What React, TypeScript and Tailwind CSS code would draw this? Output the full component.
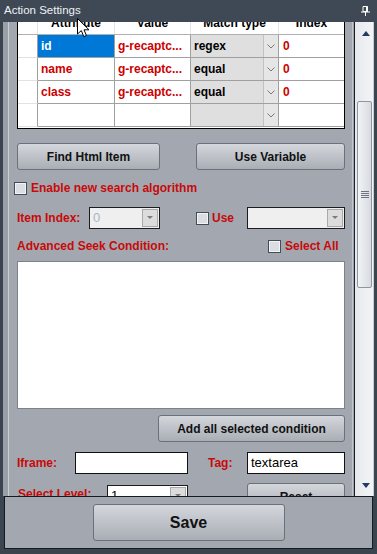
import React from "react";

type Row = { attr: string; value: string; match: string; index: string; selected?: boolean };

const rows: Row[] = [
  { attr: "id", value: "g-recaptc...", match: "regex", index: "0", selected: true },
  { attr: "name", value: "g-recaptc...", match: "equal", index: "0" },
  { attr: "class", value: "g-recaptc...", match: "equal", index: "0" },
  { attr: "", value: "", match: "", index: "" },
];

function Checkbox() {
  return (
    <span className="block w-[13px] h-[13px] shrink-0 border border-[#444c58] bg-[#dadde2] shadow-[inset_1px_1px_0_#f3f4f6,inset_-1px_-1px_0_#f3f4f6]" />
  );
}

function Btn({ label, className }: { label: string; className: string }) {
  return (
    <div
      className={`shrink-0 flex items-center justify-center rounded-[3px] border border-[#6b717a] bg-linear-to-b from-[#d4d7dc] to-[#a9aeb5] font-bold text-[#111] ${className}`}
    >
      {label}
    </div>
  );
}

function DropArrow() {
  return (
    <div className="w-[16px] h-full border border-[#a9a9a9] bg-[#dcdcdc] flex items-center justify-center">
      <svg width="6" height="4" viewBox="0 0 6 4">
        <path d="M0 0 L6 0 L3 3 Z" fill="#7b7b7b" />
      </svg>
    </div>
  );
}

function Combo({ value, className, textClass }: { value: string; className: string; textClass: string }) {
  return (
    <div className={`h-[22px] shrink-0 border border-[#1c1c1c] flex items-stretch p-[1px] ${className}`}>
      <span className={`flex-1 pl-[2px] leading-[18px] text-[13px] ${textClass}`}>{value}</span>
      <DropArrow />
    </div>
  );
}

function Field({ value, className }: { value: string; className: string }) {
  return (
    <div className={`h-[22px] shrink-0 border border-[#111] bg-white pl-[3px] leading-[20px] text-[13px] text-black ${className}`}>
      {value}
    </div>
  );
}

function Chevron() {
  return (
    <svg width="8" height="5" viewBox="0 0 8 5">
      <path d="M0.5 0.5 L4 4 L7.5 0.5" fill="none" stroke="#7a7a7a" strokeWidth="1" />
    </svg>
  );
}

function AttrTable() {
  const cols = "grid grid-cols-[20px_77px_76px_88px_65px]";
  return (
    <div className="-mt-[12px] w-[328px] shrink-0 border border-black bg-white pb-[1px]">
      <div className={`${cols} h-[24px] border-b border-[#b0b0b0] text-[12px] font-bold text-black`}>
        <div className="border-r border-[#e4e4e4]" />
        {["Attribute", "Value", "Match type", "Index"].map((h, i) => (
          <div
            key={h}
            className={`flex items-center justify-center pt-[1px] ${i < 3 ? "border-r border-[#e4e4e4]" : ""}`}
          >
            {h}
          </div>
        ))}
      </div>
      {rows.map((r, i) => (
        <div key={i} className={`${cols} h-[23px] text-[12px] font-bold text-[#cc0000]`}>
          <div className="border-r border-b border-r-[#a0a0a0] border-b-[#e2e2e2]" />
          <div className="border-r border-b border-[#a0a0a0]">
            <div
              className={`h-full pl-[3px] leading-[22px] ${r.selected ? "bg-[#0078d7] text-white" : ""}`}
            >
              {r.attr}
            </div>
          </div>
          <div className="border-r border-b border-[#a0a0a0] pl-[3px] leading-[22px]">{r.value}</div>
          <div className="border-r border-b border-[#a0a0a0] flex bg-[#dfdfdf] text-black">
            <span className="flex-1 pl-[3px] leading-[22px]">{r.match}</span>
            <span className="w-[15px] border-l border-[#c2c2c2] bg-[#e6e6e6] flex items-center justify-center">
              <Chevron />
            </span>
          </div>
          <div className="border-b border-[#a0a0a0] pl-[4px] leading-[22px]">{r.index}</div>
        </div>
      ))}
    </div>
  );
}

function Scrollbar() {
  return (
    <div className="w-[20px] h-full border-l border-[#1b1f26] flex">
      <div className="w-[18px] h-full bg-linear-to-r from-[#e6e9ed] to-[#f3f4f6] flex flex-col items-start">
        <svg className="ml-[7px] mt-[9px]" width="8" height="5" viewBox="0 0 8 5">
          <path d="M0 5 L4 0 L8 5 Z" fill="#243a63" />
        </svg>
        <div className="ml-[2px] mt-[65px] w-[15px] h-[187px] rounded-[2px] border border-[#8e96a3] bg-linear-to-r from-[#f2f3f5] to-[#d7dbe1] flex flex-col items-center justify-center gap-[1px]">
          {[0, 1, 2, 3].map((k) => (
            <span key={k} className="block w-[8px] h-[1px] bg-[#6e7581]" />
          ))}
        </div>
        <div className="flex-1" />
        <svg className="ml-[7px] mb-[8px]" width="8" height="5" viewBox="0 0 8 5">
          <path d="M0 0 L8 0 L4 5 Z" fill="#243a63" />
        </svg>
      </div>
      <div className="w-[1px] h-full bg-[#c9cdd3]" />
    </div>
  );
}

export default function App() {
  const red = "text-[#c80a0a]";
  return (
    <div
      className="relative w-[377px] h-[554px] bg-[#3b4550] flex flex-col overflow-hidden select-none"
      style={{ fontFamily: '"Liberation Sans", Arial, sans-serif' }}
    >
      {/* title */}
      <div className="h-[22px] shrink-0 bg-[#3e4955] flex items-center justify-between pl-[4px] pr-[7px]">
        <span className="text-[11.5px] text-[#eef1f4]">Action Settings</span>
        <svg width="9" height="10" viewBox="0 0 9 10">
          <path d="M2 0.5 H6.5 V5.5 H2 Z" fill="none" stroke="#ffffff" strokeWidth="1" />
          <rect x="5" y="0.5" width="1.5" height="5" fill="#ffffff" />
          <rect x="0" y="5.5" width="9" height="1" fill="#ffffff" />
          <rect x="4" y="6" width="1" height="4" fill="#ffffff" />
        </svg>
      </div>

      {/* scroll area */}
      <div className="h-[474px] shrink-0 flex">
        <div className="w-[3px]" />
        <div className="w-[351px] h-full flex overflow-hidden bg-[#a3a8b0]">
          <div className="w-[5px] h-full bg-[#9aa0a8] shrink-0" />
          <div className="w-[1px] h-full bg-[#ccd0d5] shrink-0" />
          <div className="w-[343px] self-start shrink-0 flex flex-col pl-[8px] pr-[7px] text-[12px] font-bold">
            <AttrTable />

            <div className="mt-[14px] flex justify-between">
              <Btn label="Find Html Item" className="w-[143px] h-[27px] text-[12px]" />
              <Btn label="Use Variable" className="w-[149px] h-[27px] text-[12px]" />
            </div>

            <div className="mt-[10px] h-[16px] -ml-[3px] flex items-center gap-[4px]">
              <Checkbox />
              <span className={red}>Enable new search algorithm</span>
            </div>

            <div className="mt-[11px] h-[22px] flex items-center">
              <span className={`w-[72px] ${red}`}>Item Index:</span>
              <Combo value="0" className="w-[71px] bg-[#efefef]" textClass="text-[#a9b5c2] font-normal" />
              <span className="w-[36px]" />
              <Checkbox />
              <span className={`ml-[3px] ${red}`}>Use</span>
              <Combo value="" className="ml-auto w-[98px] bg-[#efefef]" textClass="" />
            </div>

            <div className="mt-[9px] h-[16px] flex items-center">
              <span className={red}>Advanced Seek Condition:</span>
              <div className="ml-auto w-[77px] flex items-center gap-[4px]">
                <Checkbox />
                <span className={red}>Select All</span>
              </div>
            </div>

            <div className="mt-[7px] h-[148px] shrink-0 border border-[#7d828a] bg-white" />

            <div className="mt-[6px] flex justify-end">
              <Btn label="Add all selected condition" className="w-[187px] h-[27px] text-[12px]" />
            </div>

            <div className="mt-[10px] h-[22px] flex items-center">
              <span className={`w-[58px] ${red}`}>Iframe:</span>
              <Field value="" className="w-[113px]" />
              <span className="w-[20px]" />
              <span className={`w-[39px] ${red}`}>Tag:</span>
              <Field value="textarea" className="w-[98px] font-normal" />
            </div>

            <div className="mt-[9px] flex items-start">
              <span className={`w-[90px] mt-[1px] pl-[1px] leading-[20px] ${red}`}>Select Level:</span>
              <div className="mt-[2px]">
                <Combo value="1" className="w-[81px] bg-white" textClass="text-black font-normal" />
              </div>
              <Btn label="Reset" className="ml-auto w-[98px] h-[27px] text-[12px]" />
            </div>
          </div>
          <div className="w-[1px] h-full bg-[#c3c7cd] shrink-0" />
          <div className="w-[1px] h-full bg-[#9ca1a9] shrink-0" />
        </div>
        <Scrollbar />
        <div className="w-[3px]" />
      </div>

      {/* bottom panel */}
      <div className="ml-[4px] w-[369px] h-[53px] shrink-0 border border-[#151a20] bg-[#a3a8b0] flex justify-center pt-[7px]">
        <Btn label="Save" className="w-[192px] h-[37px] text-[16px]" />
      </div>

      {/* mouse pointer */}
      <svg className="absolute left-[77px] top-[18px] pointer-events-none" width="13" height="20" viewBox="0 0 13 20">
        <path
          d="M0.5 0.5 L0.5 16 L4.3 12.6 L6.8 18.6 L9.4 17.5 L7 11.8 L12 11.8 Z"
          fill="#ffffff"
          stroke="#000000"
          strokeWidth="1"
          strokeLinejoin="round"
        />
      </svg>
    </div>
  );
}
